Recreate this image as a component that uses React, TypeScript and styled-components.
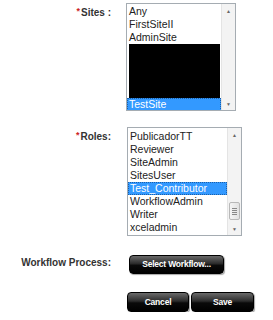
import React from 'react'
import styled, { createGlobalStyle } from 'styled-components'

const GlobalStyle = createGlobalStyle`
  html, body {
    margin: 0;
    padding: 0;
    background: #ffffff;
    font-family: "Liberation Sans", Arial, sans-serif;
  }
`

const Form = styled.div`
  display: grid;
  grid-template-columns: 111px 1fr;
  column-gap: 15px;
  padding-top: 3px;
  width: 273px;
`

const Label = styled.div<{ $top: number }>`
  text-align: right;
  font-size: 10px;
  font-weight: 700;
  color: #333333;
  padding-top: ${(p) => p.$top}px;
  white-space: nowrap;
`

const Star = styled.span`
  color: #cc2222;
  font-size: 9px;
  vertical-align: 2px;
  margin-right: 1px;
`

const Cell = styled.div<{ $mb: number; $ml?: number }>`
  margin-bottom: ${(p) => p.$mb}px;
  margin-left: ${(p) => p.$ml || 0}px;
`

const ListBox = styled.div<{ $w: number; $h: number }>`
  display: flex;
  width: ${(p) => p.$w}px;
  height: ${(p) => p.$h}px;
  border: 1px solid #a5acb2;
  box-sizing: border-box;
  background: #ffffff;
  overflow: hidden;
`

const Items = styled.div<{ $pt: number }>`
  flex: 1;
  padding: ${(p) => p.$pt}px 0 0 0;
  min-width: 0;
`

const Item = styled.div<{ $selected?: boolean }>`
  height: 13px;
  line-height: 13px;
  font-size: 10.5px;
  color: ${(p) => (p.$selected ? '#ffffff' : '#222222')};
  background: ${(p) => (p.$selected ? '#3399ff' : 'transparent')};
  padding-left: 2px;
  white-space: nowrap;
  box-sizing: border-box;
  outline: ${(p) => (p.$selected ? '1px dotted #1c5fa8' : 'none')};
  outline-offset: -1px;
`

const Redacted = styled.div`
  height: 54px;
  margin: 0 0 0 2px;
  width: 91px;
  background: #000000;
`

const ScrollBar = styled.div`
  width: 13px;
  display: flex;
  flex-direction: column;
  background: #f3f3f3;
  border-left: 1px solid #e4e4e4;
`

const Arrow = styled.div`
  height: 13px;
  display: flex;
  align-items: center;
  justify-content: center;
  color: #666666;
  font-size: 5px;
`

const Track = styled.div`
  flex: 1;
  display: flex;
  flex-direction: column;
  justify-content: flex-end;
`

const Thumb = styled.div`
  height: 16px;
  margin: 0 1px 2px 1px;
  border: 1px solid #b8b8b8;
  border-radius: 2px;
  background: linear-gradient(to right, #f4f4f4, #e2e2e2);
  display: flex;
  flex-direction: column;
  justify-content: center;
  align-items: center;
  gap: 1px;
`

const Grip = styled.div`
  width: 5px;
  height: 1px;
  background: #888888;
`

const Button = styled.button<{ $w: number; $h: number }>`
  width: ${(p) => p.$w}px;
  height: ${(p) => p.$h}px;
  border: 1px solid #000000;
  border-radius: 4px;
  background: linear-gradient(to bottom, #6a6a6a 0%, #2b2b2b 45%, #0a0a0a 55%, #000000 100%);
  color: #ffffff;
  font-family: "Liberation Sans", Arial, sans-serif;
  font-size: 8.5px;
  font-weight: 700;
  letter-spacing: -0.2px;
  padding: 0;
  box-shadow: 1px 1px 1px rgba(0, 0, 0, 0.35);
`

const ButtonRow = styled.div`
  display: flex;
  gap: 2px;
`

const Scroll = ({ thumb }: { thumb?: boolean }) => (
  <ScrollBar>
    <Arrow>▲</Arrow>
    <Track>
      {thumb && (
        <Thumb>
          <Grip />
          <Grip />
          <Grip />
          <Grip />
        </Thumb>
      )}
    </Track>
    <Arrow>▼</Arrow>
  </ScrollBar>
)

const roles = ['PublicadorTT', 'Reviewer', 'SiteAdmin', 'SitesUser', 'Test_Contributor', 'WorkflowAdmin', 'Writer', 'xceladmin']

const App: React.FC = () => {
  return (
    <>
      <GlobalStyle />
      <Form>
        <Label $top={3}>
          <Star>*</Star>Sites :
        </Label>
        <Cell $mb={16}>
          <ListBox $w={110} $h={108}>
            <Items $pt={1}>
              <Item>Any</Item>
              <Item>FirstSiteII</Item>
              <Item>AdminSite</Item>
              <Redacted />
              <Item $selected>TestSite</Item>
            </Items>
            <Scroll />
          </ListBox>
        </Cell>

        <Label $top={3}>
          <Star>*</Star>Roles:
        </Label>
        <Cell $mb={17} $ml={1}>
          <ListBox $w={115} $h={109}>
            <Items $pt={2}>
              {roles.map((r) => (
                <Item key={r} $selected={r === 'Test_Contributor'}>
                  {r}
                </Item>
              ))}
            </Items>
            <Scroll thumb />
          </ListBox>
        </Cell>

        <Label $top={4}>Workflow Process:</Label>
        <Cell $mb={18} $ml={3}>
          <Button $w={95} $h={19}>Select Workflow...</Button>
        </Cell>

        <div />
        <Cell $mb={0} $ml={1}>
          <ButtonRow>
            <Button $w={62} $h={20}>Cancel</Button>
            <Button $w={63} $h={20}>Save</Button>
          </ButtonRow>
        </Cell>
      </Form>
    </>
  )
}

export default App
